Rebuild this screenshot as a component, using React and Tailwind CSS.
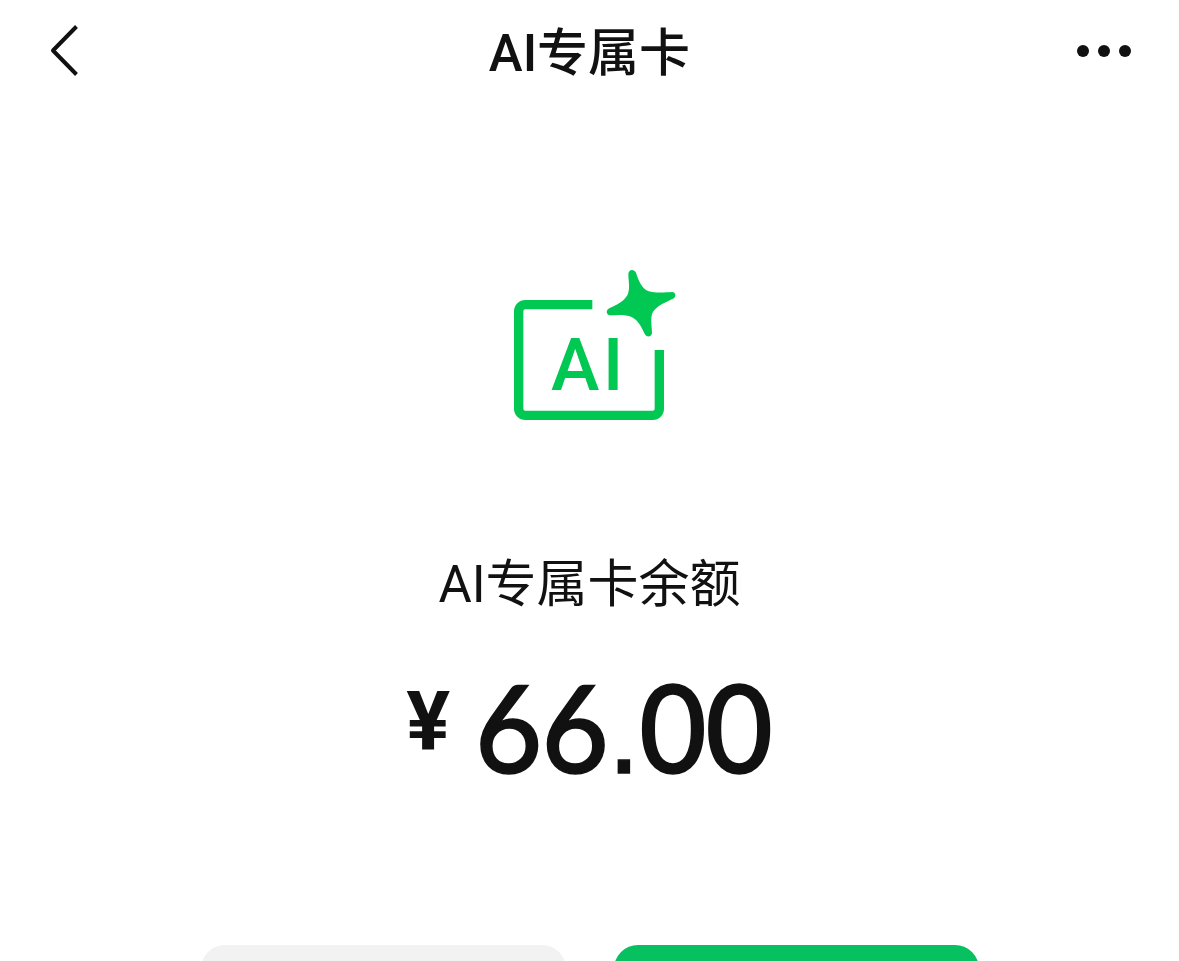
export default function App() {
  const cjk = { fontFamily: 'Roboto, "Noto Sans CJK SC", sans-serif' };
  return (
    <div className="h-[961px] w-full overflow-hidden bg-white text-[#111111]" style={cjk}>
      <header className="flex h-[102px] items-center justify-between px-[48px]">
        <div className="w-[54px]">
          <svg width="32" height="54" viewBox="0 0 32 54" fill="none" className="block">
            <path d="M28.5 2.5 L5 26.5 L28.5 50.5" stroke="#111111" strokeWidth="4" strokeLinejoin="round" />
          </svg>
        </div>
        <h1 className="pt-[4px] text-[51px] leading-none font-medium">AI专属卡</h1>
        <div className="flex w-[54px] gap-[9px]">
          <span className="h-3 w-3 rounded-full bg-[#111111]" />
          <span className="h-3 w-3 rounded-full bg-[#111111]" />
          <span className="h-3 w-3 rounded-full bg-[#111111]" />
        </div>
      </header>
      <main className="flex flex-col items-center">
        <svg width="200" height="190" viewBox="0 0 600 570" className="mt-[148px]">
          <path d="M307 164 H106 A20 20 0 0 0 86 184 V476 A20 20 0 0 0 106 496 H488 A20 20 0 0 0 508 476 V300" fill="none" stroke="#00C853" strokeWidth="28" />
          <path d="M415 72 C416 57 432 56 438 68 C444 85 450 106 468 120 C484 130 520 128 546 126 C558 126 560 141 549 146 C527 157 504 165 490 184 C479 202 486 228 486 248 C485 262 469 263 464 251 C454 231 445 211 425 201 C405 192 380 195 360 196 C348 195 347 180 358 175 C379 165 400 156 412 136 C422 116 415 92 415 72 Z" fill="#00C853" />
          <text x="183" y="420" fill="#00C853" fontSize="219" fontWeight="500" style={{ fontFamily: 'Roboto, sans-serif' }}>A<tspan dx="10">I</tspan></text>
        </svg>
        <p className="mt-[115px] text-[51px] leading-[60px] font-normal">AI专属卡余额</p>
        <div className="mt-[49px] flex h-[130px] items-center">
          <span className="mb-[16px] text-[82px] leading-none font-bold">¥</span>
          <span className="ml-[25px] -mr-[12px] origin-left scale-x-[0.96] text-[121px] leading-none font-medium tracking-[-1px] [-webkit-text-stroke:1.5px_#111111]" style={{ fontFamily: 'Lato, sans-serif' }}>
            66<span style={{ fontFamily: '"Liberation Sans", sans-serif' }}>.</span>00
          </span>
        </div>
        <div className="mt-[151px] flex gap-[48px]">
          <button className="h-[96px] w-[365px] rounded-[24px] bg-[#F2F2F2]" />
          <button className="h-[96px] w-[365px] rounded-[24px] bg-[#07C160]" />
        </div>
      </main>
    </div>
  );
}
